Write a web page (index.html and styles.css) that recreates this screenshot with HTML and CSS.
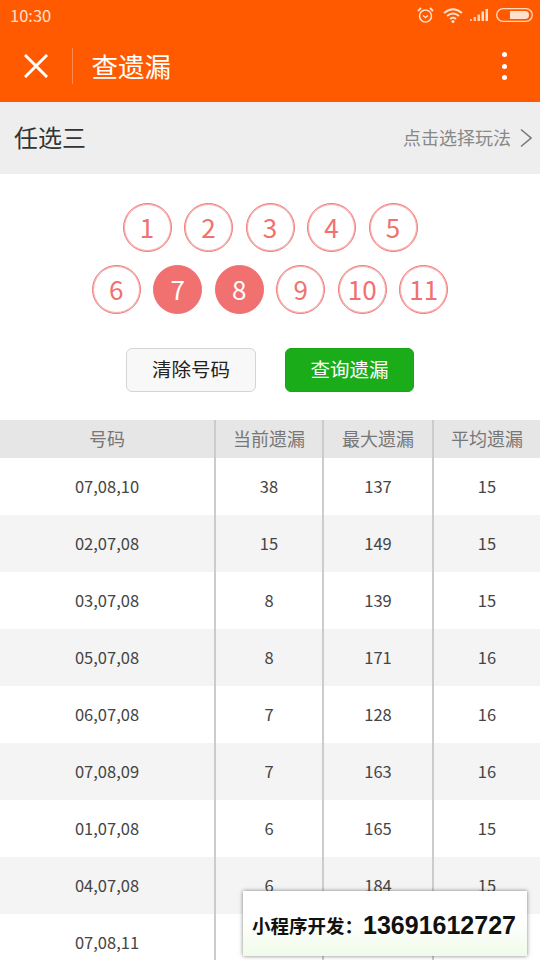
FILE: index.html
```html
<!DOCTYPE html>
<html lang="zh">
<head>
<meta charset="utf-8">
<title>查遗漏</title>
<link rel="stylesheet" href="styles.css">
</head>
<body>
<div class="app">
  <header class="top">
    <div class="status">
      <span class="time">10:30</span>
      <div class="status-icons">
        <svg class="ic ic-alarm" width="17" height="18" viewBox="0 0 17 18" fill="none" stroke="#ffe0cc" stroke-width="1.5"><circle cx="8.5" cy="10" r="6"/><path d="M6 9.5l2.5 2 2.500-2"/><path d="M1 5l3-3M16 5l-3-3" stroke-width="1.800"/></svg>
        <svg class="ic" width="20" height="16" viewBox="0 0 20 16" fill="none" stroke="#ffe0cc" stroke-width="1.8"><path d="M1 6q9-7.500 18 0"/><path d="M4 9q6-5 12 0"/><path d="M7 12q3-2.500 6 0"/><circle cx="10" cy="14.500" r="1.500" fill="#ffe0cc" stroke="none"/></svg>
        <svg class="ic" width="19" height="14" viewBox="0 0 19 14" fill="#ffe0cc"><rect x="0" y="11" width="2" height="2" opacity=".7"/><rect x="3.500" y="9" width="2.500" height="4" opacity=".8"/><rect x="7.500" y="6.500" width="2.500" height="6.500" opacity=".9"/><rect x="11.500" y="3.500" width="2.500" height="9.500"/><rect x="15.500" y="1" width="2.500" height="12"/></svg>
        <svg class="ic" width="37" height="14" viewBox="0 0 37 14" fill="none"><rect x=".7" y=".7" width="35.600" height="12.600" rx="6.300" stroke="#ffd9c0" stroke-width="1.300"/><path d="M14 3h15a4 4 0 0 1 0 8H14z" fill="#ffe0cc"/></svg>
      </div>
    </div>
    <nav class="nav">
      <svg class="close" width="24" height="24" viewBox="0 0 24 24" stroke="#fff" stroke-width="3" stroke-linecap="square"><path d="M2 2l20 20M22 2L2 22"/></svg>
      <span class="nav-sep"></span>
      <span class="nav-title">查遗漏</span>
      <span class="dots"><i></i><i></i><i></i></span>
    </nav>
  </header>

  <section class="picker-bar">
    <span class="mode">任选三</span>
    <span class="hint">点击选择玩法<svg class="chev" width="12" height="20" viewBox="0 0 12 20" fill="none" stroke="#777" stroke-width="1.500"><path d="M1 1.500l10 8.500-10 8.500"/></svg></span>
  </section>

  <section class="balls">
    <div class="ball-row">
      <span class="ball">1</span><span class="ball">2</span><span class="ball">3</span><span class="ball">4</span><span class="ball">5</span>
    </div>
    <div class="ball-row">
      <span class="ball">6</span><span class="ball on">7</span><span class="ball on">8</span><span class="ball">9</span><span class="ball">10</span><span class="ball">11</span>
    </div>
  </section>

  <section class="actions">
    <button class="btn btn-clear">清除号码</button>
    <button class="btn btn-query">查询遗漏</button>
  </section>

  <table class="grid">
    <thead>
      <tr><th>号码</th><th>当前遗漏</th><th>最大遗漏</th><th>平均遗漏</th></tr>
    </thead>
    <tbody>
      <tr><td>07,08,10</td><td>38</td><td>137</td><td>15</td></tr>
      <tr><td>02,07,08</td><td>15</td><td>149</td><td>15</td></tr>
      <tr><td>03,07,08</td><td>8</td><td>139</td><td>15</td></tr>
      <tr><td>05,07,08</td><td>8</td><td>171</td><td>16</td></tr>
      <tr><td>06,07,08</td><td>7</td><td>128</td><td>16</td></tr>
      <tr><td>07,08,09</td><td>7</td><td>163</td><td>16</td></tr>
      <tr><td>01,07,08</td><td>6</td><td>165</td><td>15</td></tr>
      <tr><td>04,07,08</td><td>6</td><td>184</td><td>15</td></tr>
      <tr><td>07,08,11</td><td></td><td></td><td></td></tr>
    </tbody>
  </table>

  <div class="promo"><span class="promo-label">小程序开发：</span><b>13691612727</b></div>
</div>
</body>
</html>
```
FILE: styles.css
```css
* { box-sizing: border-box; }
html, body { margin: 0; padding: 0; }
body {
  width: 540px; height: 960px; overflow: hidden; background: #fff;
  font-family: "Noto Sans CJK SC", "Noto Sans", sans-serif;
}
.app { position: relative; width: 540px; height: 960px; overflow: hidden; }
.top { height: 102px; background: #ff5a00; display: flex; flex-direction: column; }
.status {
  height: 30px; padding: 0 7px 0 10px; display: flex; align-items: center;
  justify-content: space-between; color: #ffe0cc;
}
.time { font-size: 16.500px; line-height: 30px; }
.status-icons { display: flex; align-items: center; gap: 7px; }
.ic { display: block; }
.ic-alarm { margin-right: 2px; }
.nav { flex: 1; display: flex; align-items: center; padding: 0 0 0 24px; }
.close { width: 24px; height: 24px; }
.nav-sep { width: 1px; height: 36px; background: #ff8a4d; margin-left: 24px; }
.nav-title { font-size: 26.500px; color: #fff; margin-left: 18.500px; line-height: 36px; }
.dots { margin-left: auto; margin-right: 33px; display: flex; flex-direction: column; gap: 6.500px; }
.dots i { display: block; width: 5px; height: 5px; border-radius: 50%; background: #fff; }
.picker-bar {
  height: 72px; background: #eee; display: flex; align-items: center;
  justify-content: space-between; padding: 0 8px 3px 14px;
}
.mode { font-size: 24px; color: #333; }
.hint { font-size: 18px; color: #888; display: flex; align-items: center; gap: 9px; }
.chev { display: block; margin-top: 2px; }
.balls {
  padding: 29px 0 0 0; display: flex; flex-direction: column; gap: 12.500px; align-items: center;
}
.ball-row { display: flex; gap: 12.500px; }
.ball {
  width: 49px; height: 49px; border-radius: 50%; border: 1px solid #f17070;
  box-shadow: inset 0 0 0 1px rgba(241, 112, 112, .55);
  color: #f17070; font-size: 26px; display: flex; align-items: center; justify-content: center;
  padding-bottom: 2px;
}
.ball.on { background: #f17070; color: #fff; }
.actions { display: flex; justify-content: center; gap: 29px; margin-top: 34.500px; }
.btn {
  width: 130px; height: 44px; border-radius: 6px; font-family: inherit; font-size: 19.500px; padding: 0 0 4px;
}
.btn-clear { background: #f8f8f8; border: 1px solid #d5d5d5; color: #222; }
.btn-query { width: 129px; background: #1aad19; border: 1px solid #1aa518; color: #fff; }
.grid {
  width: 540px; margin-top: 28px; border-collapse: collapse; table-layout: fixed;
}
.grid th:nth-child(1), .grid td:nth-child(1) { width: 215px; }
.grid th:nth-child(2), .grid td:nth-child(2) { width: 108px; }
.grid th:nth-child(3), .grid td:nth-child(3) { width: 110px; }
.grid th {
  height: 38px; background: #e6e6e6; color: #777; font-weight: 400; font-size: 18px; padding: 0 0 2px;
}
.grid td {
  height: 57px; text-align: center; color: #444; font-size: 16.500px; padding: 0 0 2px;
}
.grid th + th, .grid td + td { border-left: 2px solid #ccc; }
.grid tbody tr:nth-child(even) { background: #f4f4f4; }
.promo {
  position: absolute; left: 243px; top: 891px; width: 284px; height: 65px;
  background: linear-gradient(#fff, #fff 45%, #f0fbe9);
  box-shadow: 0 0 4px rgba(0,0,0,.5);
  display: flex; align-items: center; justify-content: center; padding: 3px 2px 0 0;
  font-weight: 700; color: #111; white-space: nowrap;
}
.promo-label { font-size: 18.500px; }
.promo b { font-family: "Liberation Sans", sans-serif; font-size: 25px; }
```
